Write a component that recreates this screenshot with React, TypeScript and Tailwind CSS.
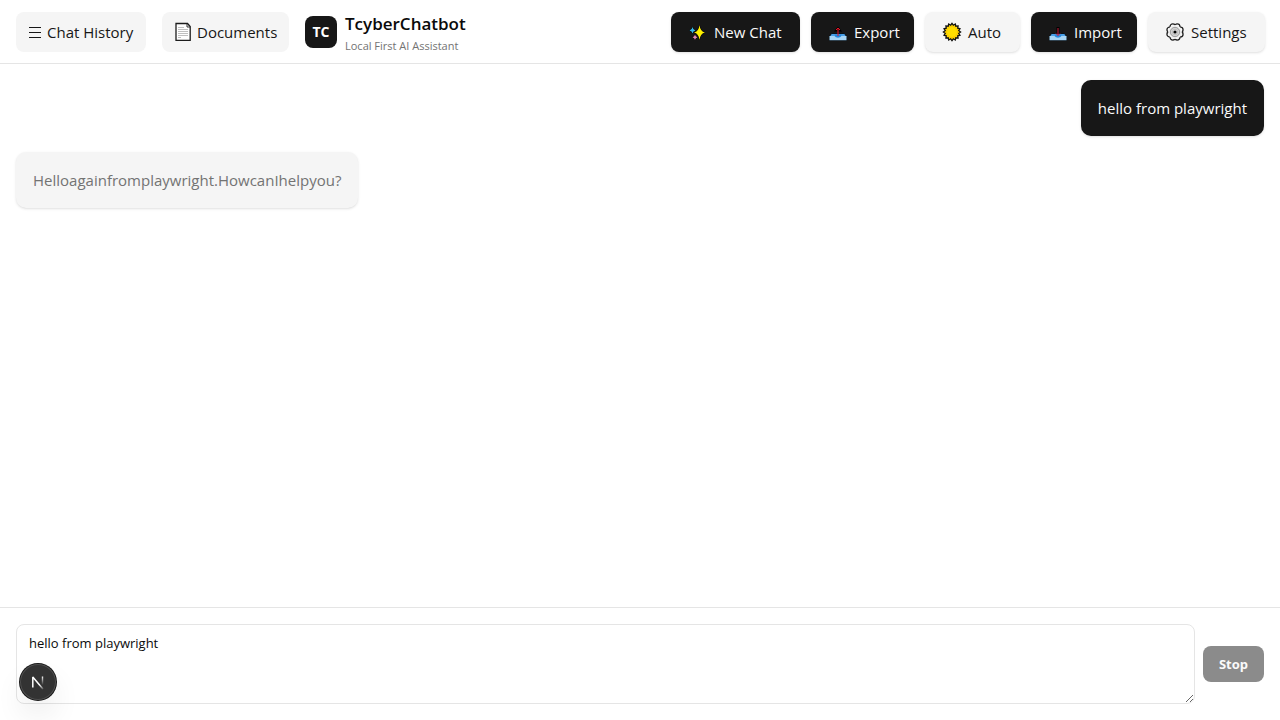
import React, { useState } from "react";

function ring(count: number, outer: number, inner: number) {
  return Array.from({ length: count * 2 }, (_, i) => {
    const angle = (Math.PI * i) / count - Math.PI / 2;
    const radius = i % 2 === 0 ? outer : inner;
    return `${(10 + radius * Math.cos(angle)).toFixed(2)},${(10 + radius * Math.sin(angle)).toFixed(2)}`;
  }).join(" ");
}

const GEAR_TEETH = Array.from({ length: 8 }, (_, i) => {
  const angle = (Math.PI * (i + 0.5)) / 4;
  return { x: 10 + 5.8 * Math.cos(angle), y: 10 + 5.8 * Math.sin(angle) };
});

function MenuIcon() {
  return (
    <svg aria-hidden="true" className="h-4 w-3" viewBox="0 0 12 16" stroke="#171717" strokeWidth="1">
      <path d="M0 3.500h12M0 8.500h12M0 13.500h12" />
    </svg>
  );
}

function DocumentIcon() {
  return (
    <svg aria-hidden="true" className="h-5 w-4" viewBox="0 0 16 20">
      <path d="M1 1.500h11.500L15.200 4.500v13.800H1z" fill="#fff" stroke="#1c1c1c" strokeWidth="1.300" />
      <path d="M12 2v3h3" fill="none" stroke="#333" strokeWidth="1" />
      <path d="M3 5.500h6M3 7.500h10M3 9.500h10M3 11.500h10M3 13.500h10M3 15.500h3" stroke="#c0c0c0" strokeWidth="1" />
    </svg>
  );
}

function SparklesIcon() {
  return (
    <svg aria-hidden="true" className="h-5 w-5" viewBox="0 0 20 20" stroke="#000" strokeWidth="0.800" paintOrder="stroke">
      <path d="M11.500 3Q12.200 9.500 17 10.500Q12.200 11.500 11.500 18Q10.800 11.500 6 10.500Q10.800 9.500 11.500 3z" fill="#fff100" />
      <path d="M4.500 5Q4.900 7.700 7.500 8.500Q4.900 9.200 4.500 11.500Q4.100 9.200 1.500 8.500Q4.100 7.700 4.500 5z" fill="#35b8ea" />
      <path d="M7 12.500Q7.400 14.700 9.500 15.200Q7.400 15.700 7 18Q6.600 15.700 4.500 15.200Q6.600 14.700 7 12.500z" fill="#e58ab5" />
    </svg>
  );
}

function TrayIcon({ direction }: { direction: "up" | "down" }) {
  return (
    <svg aria-hidden="true" className="h-5 w-5" viewBox="0 0 20 20">
      <path d="M3.500 11.500h13l2 3v4h-17v-4z" fill="#4a9fe6" stroke="#000" strokeWidth="0.800" />
      <path d="M1.500 14H6.500q1 1.500 3.500 1.500t3.500-1.500h5v4.300h-17z" fill="#a8d5f5" />
      <path d="M6.500 12.500h7q-.5 3-3.500 3t-3.500-3z" fill="#2486dc" />
      {direction === "up" ? (
        <>
          <path d="M10 4.500L6 9.500h8z" fill="#000" />
          <path d="M10 14V6M8 8L10 6l2 2" fill="none" stroke="#e81224" strokeWidth="1" />
        </>
      ) : (
        <>
          <path d="M8.500 5h3v7h-3z" fill="#000" />
          <path d="M10 6v7.500M8 11.500l2 2 2-2" fill="none" stroke="#c81b3b" strokeWidth="1" />
        </>
      )}
    </svg>
  );
}

function SunIcon() {
  return (
    <svg aria-hidden="true" className="h-5 w-5" viewBox="0 0 20 20">
      <polygon points={ring(16, 8.600, 6.900)} fill="#ffd800" stroke="#111" strokeWidth="1.300" />
      <circle cx="10" cy="10" r="5.500" fill="#ffde00" stroke="#f5bd00" strokeWidth="0.700" />
    </svg>
  );
}

function GearIcon() {
  return (
    <svg aria-hidden="true" className="h-5 w-5" viewBox="0 0 20 20">
      {GEAR_TEETH.map((tooth) => (
        <circle key={`${tooth.x}-${tooth.y}`} cx={tooth.x} cy={tooth.y} r="2.700" fill="#fff" stroke="#222" strokeWidth="1.300" />
      ))}
      <circle cx="10" cy="10" r="6.900" fill="#f0f0f0" />
      <circle cx="10" cy="10" r="4.700" fill="#d2d2d2" stroke="#9a9a9a" />
      <circle cx="10" cy="10" r="2.700" fill="#e4e4e4" stroke="#aaa" strokeWidth="0.600" />
      <circle cx="10" cy="10" r="1.600" fill="#000" />
    </svg>
  );
}

function FrameworkMark() {
  return (
    <svg aria-hidden="true" className="h-5 w-5" viewBox="0 0 20 20" fill="none">
      <defs>
        <linearGradient id="diagonal" x1="9" y1="10" x2="15" y2="17" gradientUnits="userSpaceOnUse">
          <stop offset="0.400" stopColor="#fff" />
          <stop offset="1" stopColor="#fff" stopOpacity="0.200" />
        </linearGradient>
        <linearGradient id="upright" x1="0" y1="4" x2="0" y2="13" gradientUnits="userSpaceOnUse">
          <stop stopColor="#fff" />
          <stop offset="1" stopColor="#fff" stopOpacity="0" />
        </linearGradient>
      </defs>
      <path d="M4.800 15.500V5L15 17" stroke="url(#diagonal)" strokeWidth="1.500" strokeLinejoin="bevel" />
      <path d="M14.500 4.500v9" stroke="url(#upright)" strokeWidth="1.400" />
    </svg>
  );
}

type ActionProps = {
  icon: React.ReactNode;
  label: string;
  className: string;
};

function Action({ icon, label, className }: ActionProps) {
  return (
    <button
      type="button"
      className={`flex h-10 shrink-0 items-center gap-[6px] rounded-lg pl-[17px] whitespace-nowrap shadow-sm ${className}`}
    >
      {icon}
      <span>{label}</span>
    </button>
  );
}

export default function App() {
  const [draft, setDraft] = useState("hello from playwright");

  return (
    <div className="flex min-h-screen flex-col bg-white font-['Open_Sans','Noto_Sans',sans-serif] text-[15px] leading-6 text-[#171717]">
      <header className="flex h-16 items-center justify-between border-b border-[#e5e5e5] pr-[15px] pl-4">
        <div className="flex items-center gap-4">
          <button type="button" className="flex h-10 w-[130px] items-center gap-[6px] rounded-lg bg-[#f5f5f5] pl-[13px] whitespace-nowrap">
            <MenuIcon />
            Chat History
          </button>
          <button type="button" className="flex h-10 w-[127px] items-center gap-[6px] rounded-lg bg-[#f5f5f5] pl-[13px] whitespace-nowrap">
            <DocumentIcon />
            Documents
          </button>
          <div className="flex items-center gap-2">
            <div className="flex h-8 w-8 items-center justify-center rounded-lg bg-[#171717] text-sm font-bold text-white">TC</div>
            <div className="pt-1">
              <h1 className="text-[17px] leading-6 font-semibold text-[#0a0a0a]">TcyberChatbot</h1>
              <p className="text-[11px] leading-5 text-[#737373]">Local First AI Assistant</p>
            </div>
          </div>
        </div>
        <nav aria-label="Chat actions" className="flex items-center gap-[11px]">
          <Action icon={<SparklesIcon />} label="New Chat" className="w-[129px] bg-[#171717] text-[#fafafa]" />
          <Action icon={<TrayIcon direction="up" />} label="Export" className="w-[103px] bg-[#171717] text-[#fafafa]" />
          <Action icon={<SunIcon />} label="Auto" className="w-[95px] bg-[#f5f5f5]" />
          <Action icon={<TrayIcon direction="down" />} label="Import" className="w-[106px] bg-[#171717] text-[#fafafa]" />
          <Action icon={<GearIcon />} label="Settings" className="w-[117px] bg-[#f5f5f5]" />
        </nav>
      </header>

      <main className="flex flex-1 flex-col gap-4 p-4">
        <p className="self-end rounded-[10px] bg-[#171717] py-4 px-[17px] text-[#fafafa] shadow-sm">hello from playwright</p>
        <p className="self-start rounded-[10px] bg-[#f5f5f5] py-4 px-[17px] text-[#737373] shadow-sm">
          Helloagainfromplaywright.HowcanIhelpyou?
        </p>
      </main>

      <form className="flex items-center gap-2 border-t border-[#e5e5e5] p-4" onSubmit={(e) => e.preventDefault()}>
        <textarea
          aria-label="Message"
          value={draft}
          onChange={(e) => setDraft(e.target.value)}
          className="h-20 min-w-0 flex-1 rounded-lg border border-[#e5e5e5] bg-white px-3 py-2 text-[13px] leading-5 text-[#0a0a0a] outline-none"
        />
        <button type="button" className="h-9 w-[61px] rounded-lg bg-[#8b8b8b] text-[13px] font-bold text-[#fafafa]">
          Stop
        </button>
      </form>

      <button
        type="button"
        aria-label="Open developer tools"
        className="fixed bottom-5 left-5 flex h-9 w-9 items-center justify-center rounded-full bg-[#333333] shadow-[0_0_0_1px_#171717,inset_0_0_0_1px_rgba(255,255,255,0.14),0_16px_32px_-8px_rgba(0,0,0,0.24)]"
      >
        <FrameworkMark />
      </button>
    </div>
  );
}
